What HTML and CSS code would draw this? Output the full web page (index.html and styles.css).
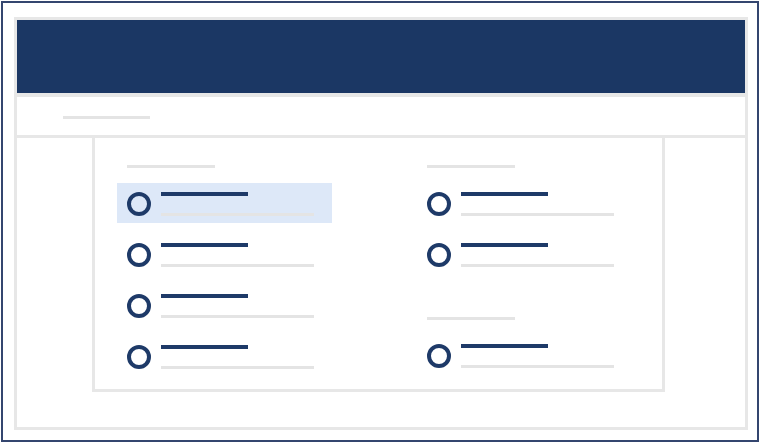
FILE: index.html
```html
<!DOCTYPE html>
<html lang="en">
<head>
    <meta charset="UTF-8">
    <meta name="viewport" content="width=device-width, initial-scale=1.0">
    <title>Radio list wireframe</title>
    <link rel="stylesheet" href="styles.css">
</head>
<body>
    <div class="screen">
        <div class="frame">
            <div class="header"></div>
            <div class="toolbar">
                <span class="bar bar-short"></span>
            </div>
            <div class="content">
                <div class="panel">
                    <div class="column">
                        <span class="bar group-title"></span>
                        <div class="option selected">
                            <span class="radio"></span>
                            <div class="option-text">
                                <span class="bar label"></span>
                                <span class="bar hint"></span>
                            </div>
                        </div>
                        <div class="option">
                            <span class="radio"></span>
                            <div class="option-text">
                                <span class="bar label"></span>
                                <span class="bar hint"></span>
                            </div>
                        </div>
                        <div class="option">
                            <span class="radio"></span>
                            <div class="option-text">
                                <span class="bar label"></span>
                                <span class="bar hint"></span>
                            </div>
                        </div>
                        <div class="option">
                            <span class="radio"></span>
                            <div class="option-text">
                                <span class="bar label"></span>
                                <span class="bar hint"></span>
                            </div>
                        </div>
                    </div>
                    <div class="column">
                        <span class="bar group-title"></span>
                        <div class="option">
                            <span class="radio"></span>
                            <div class="option-text">
                                <span class="bar label"></span>
                                <span class="bar hint"></span>
                            </div>
                        </div>
                        <div class="option">
                            <span class="radio"></span>
                            <div class="option-text">
                                <span class="bar label"></span>
                                <span class="bar hint"></span>
                            </div>
                        </div>
                        <span class="bar group-title next-group"></span>
                        <div class="option">
                            <span class="radio"></span>
                            <div class="option-text">
                                <span class="bar label"></span>
                                <span class="bar hint"></span>
                            </div>
                        </div>
                    </div>
                </div>
            </div>
        </div>
    </div>
</body>
</html>
```

FILE: styles.css
```css
* {
    box-sizing: border-box;
}

body {
    margin: 0;
    background: #ffffff;
    font-family: "Liberation Sans", Arial, sans-serif;
}

.screen {
    margin: 1px;
    height: 441px;
    border: 2px solid #34466f;
    padding: 14px 9px 10px 11px;
    display: flex;
    flex-direction: column;
}

.frame {
    flex: 1;
    border: 3px solid #e7e7e7;
    display: flex;
    flex-direction: column;
}

.header {
    height: 73px;
    background: #1b3764;
}

.toolbar {
    height: 45px;
    border-top: 4px solid #e7e7e7;
    border-bottom: 3px solid #e7e7e7;
    padding: 19px 0 0 46px;
}

.bar {
    display: block;
}

.bar-short {
    width: 87px;
    height: 3px;
    background: #e4e4e4;
}

.content {
    flex: 1;
    padding-left: 75px;
}

.panel {
    width: 573px;
    height: 254px;
    border: 3px solid #e7e7e7;
    border-top: none;
    padding: 27px 0 0 22px;
    display: flex;
}

.column {
    flex: 1;
    display: flex;
    flex-direction: column;
    align-items: flex-start;
}

.column:first-child {
    flex: none;
    width: 300px;
}

.group-title {
    width: 88px;
    height: 3px;
    margin: 0 0 15px 10px;
    background: #e4e4e4;
}

.group-title.next-group {
    margin-top: 32px;
}

.option {
    width: 215px;
    height: 40px;
    padding: 0 18px 0 10px;
    margin-bottom: 11px;
    display: flex;
    align-items: flex-start;
}

.option.selected {
    background: #dde8f8;
}

.radio {
    width: 24px;
    height: 24px;
    margin-top: 9px;
    border: 4px solid #1e3a68;
    border-radius: 50%;
    flex-shrink: 0;
}

.option-text {
    margin-left: 10px;
    display: flex;
    flex-direction: column;
}

.label {
    width: 87px;
    height: 4px;
    margin-top: 9px;
    background: #1e3a68;
}

.hint {
    width: 153px;
    height: 3px;
    margin-top: 17px;
    background: #e4e4e4;
}
```
